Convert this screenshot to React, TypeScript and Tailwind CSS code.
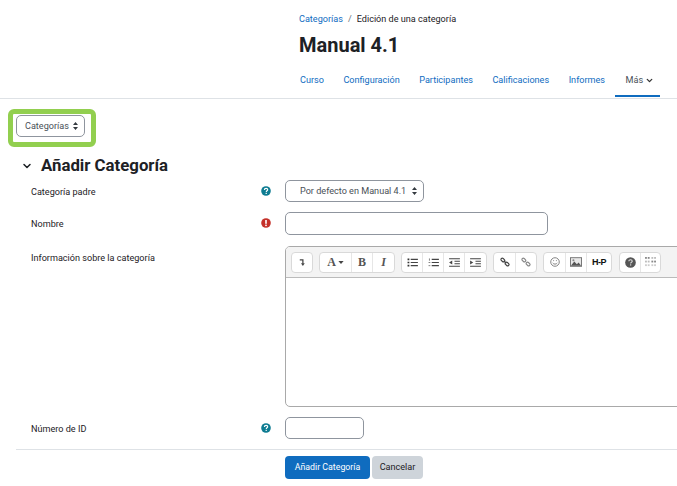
import React from 'react';
import { ChevronDown } from 'lucide-react';

const font = { fontFamily: 'Roboto, "Open Sans", sans-serif' };

// Up/down arrows used by the select-like buttons
function UpDown() {
  return (
    <svg width="5" height="8" viewBox="0 0 5 8" className="shrink-0">
      <path d="M2.500 0 5 3H0zM2.500 8 0 5h5z" fill="#343a40" />
    </svg>
  );
}

function HelpIcon() {
  return (
    <svg width="10" height="10" viewBox="0 0 10 10">
      <circle cx="5" cy="5" r="4.800" fill="#0e7c92" />
      <path d="M3.400 3.900c0-1 .7-1.600 1.700-1.600s1.600.6 1.600 1.400c0 1.200-1.400 1.100-1.400 2.200" fill="none" stroke="#fff" strokeWidth="1.200" />
      <rect x="4.600" y="6.800" width="1.200" height="1.200" fill="#fff" />
    </svg>
  );
}

function ErrorIcon() {
  return (
    <svg width="10" height="10" viewBox="0 0 10 10">
      <circle cx="5" cy="5" r="4.800" fill="#c4312a" />
      <rect x="4.200" y="2" width="1.600" height="3.800" fill="#fff" />
      <rect x="4.200" y="6.600" width="1.600" height="1.500" fill="#fff" />
    </svg>
  );
}

function ToolGroup({ children }: { children: React.ReactNode }) {
  return <div className="flex h-[21px] bg-white border border-[#d9d9d9] rounded-[4px] divide-x divide-[#e6e6e6]">{children}</div>;
}

function Tool({ w = 21, children }: { w?: number; children: React.ReactNode }) {
  return <div className="flex items-center justify-center h-full" style={{ width: w }}>{children}</div>;
}

function Lines({ kind }: { kind: 'ul' | 'ol' | 'out' | 'in' }) {
  return (
    <svg width="11" height="9" viewBox="0 0 12 10">
      {kind === 'ul' || kind === 'ol' ? (
        <>
          <path d="M4 1.500h8M4 5h8M4 8.500h8" stroke="#444" strokeWidth="1.200" />
          {kind === 'ul' ? (
            <path d="M.5 1.500h2M.5 5h2M.5 8.500h2" stroke="#333" strokeWidth="1.800" />
          ) : (
            <path d="M1.500 .5v2.500M.5 5h2M.5 8.500h2" stroke="#777" strokeWidth="1" />
          )}
        </>
      ) : (
        <>
          <path d="M0 .8h12M6 3.600h6M6 6.400h6M0 9.200h12" stroke="#444" strokeWidth="1.200" />
          <path d={kind === 'out' ? 'M0 5l3.500-2.300v4.600z' : 'M3.500 5L0 2.700v4.600z'} fill="#444" />
        </>
      )}
    </svg>
  );
}

function LinkIcon({ broken }: { broken?: boolean }) {
  return (
    <svg width="10" height="10" viewBox="0 0 12 12" fill="none" stroke={broken ? '#888' : '#444'} strokeWidth="1.400">
      <rect x=".9" y="2" width="5" height="3.200" rx="1.500" transform="rotate(45 3.400 3.600)" />
      <rect x="6" y="6.800" width="5" height="3.200" rx="1.500" transform="rotate(45 8.500 8.400)" />
      {!broken && <path d="M4.500 4.500l3 3" />}
    </svg>
  );
}

function Toolbar() {
  return (
    <div className="flex items-center gap-[6px] h-[31px] pl-[5px] bg-[#f3f3f3] border-b border-[#bbb]">
      <ToolGroup>
        <Tool w={20}>
          <svg width="7" height="9" viewBox="0 0 9 10">
            <path d="M1 1.500h4v5" fill="none" stroke="#444" strokeWidth="1.600" />
            <path d="M2.600 6H7.400L5 9.500z" fill="#444" />
          </svg>
        </Tool>
      </ToolGroup>
      <ToolGroup>
        <Tool w={32}>
          <span className="text-[12px] font-bold text-[#555] mr-[2px] leading-none" style={{ fontFamily: '"Liberation Serif", serif' }}>A</span>
          <svg width="6" height="3" viewBox="0 0 7 4"><path d="M0 0h7L3.500 4z" fill="#444" /></svg>
        </Tool>
        <Tool>
          <span className="text-[12px] font-bold text-[#555] leading-none" style={{ fontFamily: '"Liberation Serif", serif' }}>B</span>
        </Tool>
        <Tool>
          <span className="text-[12px] italic font-bold text-[#555] leading-none" style={{ fontFamily: '"Liberation Serif", serif' }}>I</span>
        </Tool>
      </ToolGroup>
      <ToolGroup>
        <Tool><Lines kind="ul" /></Tool>
        <Tool><Lines kind="ol" /></Tool>
        <Tool><Lines kind="out" /></Tool>
        <Tool><Lines kind="in" /></Tool>
      </ToolGroup>
      <ToolGroup>
        <Tool w={22}><LinkIcon /></Tool>
        <Tool w={20}><LinkIcon broken /></Tool>
      </ToolGroup>
      <ToolGroup>
        <Tool w={22}>
          <svg width="10" height="10" viewBox="0 0 11 11" fill="none" stroke="#777">
            <circle cx="5.500" cy="5.500" r="4.700" />
            <path d="M3 6.500c1 1.800 4 1.800 5 0M3.500 4h1M6.500 4h1" />
          </svg>
        </Tool>
        <Tool w={21}>
          <svg width="12" height="10" viewBox="0 0 14 11">
            <rect x=".5" y=".5" width="13" height="10" fill="#e8e8e8" stroke="#666" />
            <path d="M1 10l4-5 3 3 2-2 3 4z" fill="#555" />
            <circle cx="4" cy="3.500" r="1.200" fill="#888" />
          </svg>
        </Tool>
        <Tool w={24}>
          <span className="text-[9px] font-bold text-[#111] tracking-[-0.5px] leading-none" style={{ fontFamily: '"Liberation Sans", sans-serif' }}>H-P</span>
        </Tool>
      </ToolGroup>
      <div className="ml-[1px]">
        <ToolGroup>
          <Tool w={21}>
            <svg width="11" height="11" viewBox="0 0 12 12">
              <circle cx="6" cy="6" r="5.800" fill="#555" />
              <path d="M4.200 4.700c0-1 .8-1.700 1.900-1.700s1.800.7 1.800 1.500c0 1.300-1.700 1.200-1.700 2.500" fill="none" stroke="#ddd" strokeWidth="1.200" />
              <rect x="5.500" y="8" width="1.300" height="1.300" fill="#ddd" />
            </svg>
          </Tool>
          <Tool w={19}>
            <svg width="11" height="10" viewBox="0 0 12 11" fill="#888">
              <rect x="0" y="0" width="2" height="2" /><rect x="3" y="0" width="2" height="2" />
              <rect x="7" y="0" width="2" height="2" fill="#bbb" /><rect x="10" y="0" width="2" height="2" fill="#bbb" />
              <rect x="0" y="4" width="2" height="2" fill="#bbb" /><rect x="3" y="4" width="2" height="2" fill="#bbb" />
              <rect x="7" y="4" width="2" height="2" /><rect x="10" y="4" width="2" height="2" />
              <rect x="0" y="8" width="2" height="2" fill="#ccc" /><rect x="3" y="8" width="2" height="2" fill="#ccc" />
              <rect x="7" y="8" width="2" height="2" fill="#ccc" /><rect x="10" y="8" width="2" height="2" fill="#ccc" />
            </svg>
          </Tool>
        </ToolGroup>
      </div>
    </div>
  );
}

function Row({ label, icon, className, children }: { label: string; icon?: React.ReactNode; className?: string; children: React.ReactNode }) {
  return (
    <div className={`flex items-start pl-[31px] ${className ?? ''}`}>
      <div className="w-[230px] shrink-0 text-[9.1px] leading-[20px] pt-[2px] text-[#1d2125]">{label}</div>
      <div className="w-[24px] shrink-0 h-[22px] flex items-center">{icon}</div>
      {children}
    </div>
  );
}

export default function App() {
  const tabs = ['Curso', 'Configuración', 'Participantes', 'Calificaciones', 'Informes'];
  return (
    <div className="w-[677px] h-[486px] overflow-hidden bg-white text-[#1d2125]" style={font}>
      {/* Course header */}
      <header className="pl-[299px] border-b border-[#dee2e6] h-[99px]">
        <div className="pt-[13px] flex items-center gap-[5px] text-[9.1px] leading-[13px]">
          <span className="text-[#0f6cbf]">Categorías</span>
          <span className="text-[#6a737b]">/</span>
          <span>Edición de una categoría</span>
        </div>
        <h1 className="mt-[5px] text-[20px] font-bold leading-[28px]">Manual 4.1</h1>
        <nav className="mt-[11px] flex text-[9.1px]">
          {tabs.map((t) => (
            <span key={t} className="pl-[1px] pr-[18.5px] h-[27px] pt-[2px] leading-[17px] text-[#0f6cbf]">{t}</span>
          ))}
          <span className="ml-[-9px] pl-[11px] h-[27px] pt-[2px] leading-[17px] w-[45px] border-b-2 border-[#0f6cbf] flex items-start gap-[2px] text-[#495057]">
            Más
            <ChevronDown size={9} strokeWidth={3.500} className="mt-[4px] text-[#333]" />
          </span>
        </nav>
      </header>

      {/* Highlighted course nav dropdown */}
      <div className="pl-[8px] pt-[10px]">
        <div className="w-[88px] h-[38px] border-[5px] border-[#92cf4f] rounded-[6px] pl-[3px] pt-[1px]">
          <div className="w-[69px] h-[22px] border border-[#8f959e] rounded-[5px] bg-white flex items-center pl-[8px] gap-[4px] text-[9.1px] text-[#495057]">
            <span className="pt-[1px]">Categorías</span>
            <UpDown />
          </div>
        </div>
      </div>

      {/* Form */}
      <div className="flex items-center pl-[21px] mt-[7px] h-[23px]">
        <ChevronDown size={12} strokeWidth={3} className="text-[#1d2125]" />
        <h2 className="ml-[8px] text-[16.8px] font-bold leading-[23px]">Añadir Categoría</h2>
      </div>

      <Row label="Categoría padre" icon={<HelpIcon />} className="mt-[3px]">
        <div className="w-[139px] h-[22px] border border-[#8f959e] rounded-[5px] flex items-center pl-[14px] gap-[6px] text-[9.1px] text-[#495057] whitespace-nowrap">
          <span className="pt-[1px]">Por defecto en Manual 4.1</span>
          <UpDown />
        </div>
      </Row>

      <Row label="Nombre" icon={<ErrorIcon />} className="mt-[10px]">
        <div className="w-[263px] h-[23px] border border-[#8f959e] rounded-[5px]" />
      </Row>

      <Row label="Información sobre la categoría" className="mt-[11px]">
        <div className="w-[420px] h-[161px] shrink-0 border border-[#a9a9a9] rounded-tl-[5px] rounded-bl-[5px] overflow-hidden">
          <Toolbar />
        </div>
      </Row>

      <Row label="Número de ID" icon={<HelpIcon />} className="mt-[10px]">
        <div className="w-[79px] h-[22px] border border-[#8f959e] rounded-[5px]" />
      </Row>

      <div className="ml-[16px] mt-[10px] pl-[269px] pt-[6px] border-t border-[#dee2e6] flex gap-[2px] text-[9.1px]">
        <div className="w-[85px] h-[23px] pt-[1px] rounded-[4px] bg-[#0f6cbf] text-white flex items-center justify-center text-[8.8px]">Añadir Categoría</div>
        <div className="w-[51px] h-[23px] pt-[1px] rounded-[4px] bg-[#ced4da] text-[#1d2125] flex items-center justify-center">Cancelar</div>
      </div>
    </div>
  );
}
